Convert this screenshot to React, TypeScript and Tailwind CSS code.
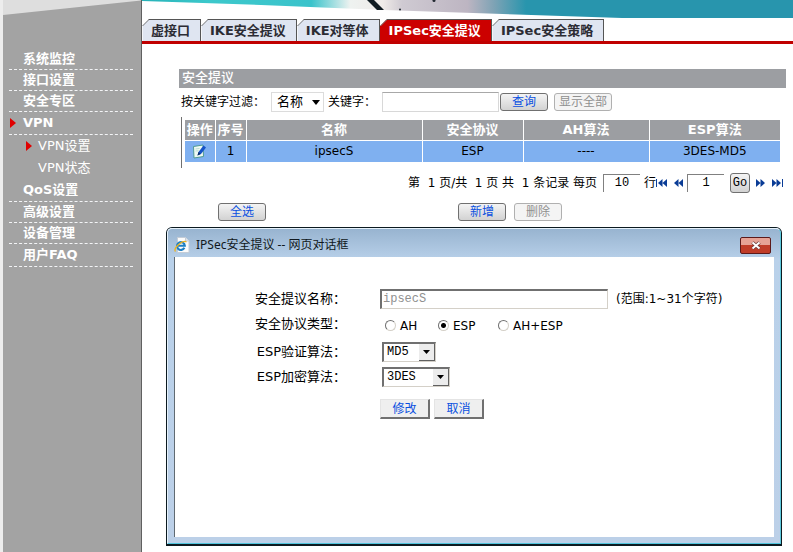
import type { ReactNode } from "react"

const tabs = ["虚接口", "IKE安全提议", "IKE对等体", "IPSec安全提议", "IPSec安全策略"]

const columns = [
  { title: "操作", width: "w-[30px]" },
  { title: "序号", width: "w-[31px]" },
  { title: "名称", width: "w-[176px]" },
  { title: "安全协议", width: "w-[101px]" },
  { title: "AH算法", width: "w-[126px]" },
  { title: "ESP算法", width: "" },
]

function RedArrow() {
  return (
    <svg width="6" height="10" viewBox="0 0 6 10" aria-hidden="true">
      <path d="M0 0l6 5-6 5z" fill="#e00000" />
    </svg>
  )
}

function MenuItem({ children, tall, active }: { children: ReactNode; tall?: boolean; active?: boolean }) {
  return (
    <li className={`${tall ? "h-[23px]" : "h-[21px]"} flex items-center border-b border-dashed border-gray-100`}>
      <span className="w-[14px] shrink-0 pl-px">{active && <RedArrow />}</span>
      <a href="#" className="font-bold leading-5">{children}</a>
    </li>
  )
}

function SubItem({ children, active }: { children: ReactNode; active?: boolean }) {
  return (
    <li className="flex h-[22px] items-center pl-[17px]">
      <span className="w-3 shrink-0">{active && <RedArrow />}</span>
      <a href="#" className="leading-5">{children}</a>
    </li>
  )
}

function Sidebar() {
  return (
    <aside className="w-[142px] shrink-0 border-r border-l-[3px] border-l-[#ededed] border-r-[#606060] bg-[#a3a3a3] text-[13px] text-white">
      <svg className="block h-[15px] w-full" viewBox="0 0 138 15" preserveAspectRatio="none" aria-hidden="true">
        <path d="M0 0h138v0.5L0 15z" fill="#dedede" />
      </svg>
      <ul className="mt-[34px] pl-1.5 pr-2">
        <MenuItem>系统监控</MenuItem>
        <MenuItem>接口设置</MenuItem>
        <MenuItem>安全专区</MenuItem>
        <MenuItem tall active>VPN</MenuItem>
        <SubItem active>VPN设置</SubItem>
        <SubItem>VPN状态</SubItem>
        <MenuItem tall>QoS设置</MenuItem>
        <MenuItem>高级设置</MenuItem>
        <MenuItem>设备管理</MenuItem>
        <MenuItem tall>用户FAQ</MenuItem>
      </ul>
    </aside>
  )
}

function Banner() {
  return (
    <svg className="block h-[19px] w-full" viewBox="0 0 651 19" preserveAspectRatio="none" aria-hidden="true">
      <defs>
        <linearGradient id="sea" x1="0" x2="1" y1="0" y2="0">
          <stop offset="0" stopColor="#27b2b8" />
          <stop offset="0.1" stopColor="#3cc8cb" />
          <stop offset="0.26" stopColor="#3ac3cb" />
          <stop offset="0.32" stopColor="#eef2f0" />
          <stop offset="0.37" stopColor="#efebe8" />
          <stop offset="0.4" stopColor="#cfcad2" />
          <stop offset="0.5" stopColor="#bdb5c2" />
          <stop offset="0.54" stopColor="#7fa3b5" />
          <stop offset="0.59" stopColor="#2895ad" />
          <stop offset="1" stopColor="#2895ad" />
        </linearGradient>
      </defs>
      <path d="M0 0h651v18H480L382 14.700 242 10 119 5 0 1z" fill="url(#sea)" />
      <path d="M225 0h7l10 10h-7z" fill="#101c22" />
      <circle cx="292" cy="0.500" r="1.500" fill="#222831" />
      <circle cx="258" cy="9.500" r="1" fill="#222831" />
    </svg>
  )
}

function TabBar() {
  return (
    <nav className="flex border-b-[3px] border-[#c00000] text-[13px] font-bold">
      {tabs.map((tab) => {
        const active = tab === "IPSec安全提议"
        return (
          <a
            key={tab}
            href="#"
            className={`relative flex h-[22px] items-center whitespace-nowrap border-r border-t border-[#555] pl-[9px] pr-2.5 ${
              active ? "bg-[#cc0000] text-white" : "bg-[#dfe5f1] text-[#2c2c34]"
            }`}
          >
            <svg className="absolute -top-px left-0" width="7" height="22" viewBox="0 0 7 22" aria-hidden="true">
              <path d="M0 0h7L0 7z" fill="#fff" />
              <path d="M7 .5L.5 7" stroke="#777" fill="none" />
              {!active && <path d="M.5 7v15" stroke="#f4f6fa" fill="none" />}
            </svg>
            {tab}
          </a>
        )
      })}
    </nav>
  )
}

function Button({ children, disabled }: { children: ReactNode; disabled?: boolean }) {
  return (
    <button
      type="button"
      disabled={disabled}
      className="flex h-[18px] min-w-12 items-center justify-center rounded-[3px] border border-[#707070] bg-linear-to-b from-[#f4f4f4] to-[#d2d2d2] px-1 text-xs text-[#0a50e0] disabled:border-[#b0b0b0] disabled:from-[#f4f4f4] disabled:to-[#f4f4f4] disabled:text-[#909090]"
    >
      {children}
    </button>
  )
}

function Filter() {
  return (
    <form className="flex h-[23px] items-center text-xs">
      <label htmlFor="field" className="w-[92px] pl-0.5">按关键字过滤：</label>
      <div className="relative">
        <select id="field" className="block h-5 w-[53px] appearance-none border border-[#dcdcdc] bg-white pl-[5px] text-[13px] leading-4">
          <option>名称</option>
        </select>
        <svg className="pointer-events-none absolute right-1 top-2" width="8" height="5" viewBox="0 0 8 5" aria-hidden="true">
          <path d="M0 0h8L4 5z" />
        </svg>
      </div>
      <label htmlFor="keyword" className="w-[58px] pl-1">关键字：</label>
      <input id="keyword" className="h-5 w-[117px] border border-[#d8d8d8] border-t-[#a8a8a8] px-1" />
      <div className="ml-px flex gap-1.5">
        <Button>查询</Button>
        <Button disabled>显示全部</Button>
      </div>
    </form>
  )
}

function EditIcon() {
  return (
    <svg width="15" height="15" viewBox="0 0 15 15" aria-hidden="true">
      <path d="M1.500 2.500L11 1l.5 11.500L2 14z" fill="#effaf2" stroke="#4f9a94" />
      <path d="M3.500 5l4-.5M3.500 7l3-.3" stroke="#b7dcd2" />
      <path d="M5.500 11.500L6.500 8l5-6.500 2.500 2-5 6.500z" fill="#1553c8" />
      <path d="M5.500 11.500l1-3.500 2.200 2z" fill="#0a2a66" />
    </svg>
  )
}

function ProposalTable() {
  return (
    <div className="ml-0.5 mr-1.5 mt-1 border-l border-[#707070] pb-1.5 pl-[3px] pt-[3px]">
      <table className="w-full table-fixed border-collapse text-center">
        <thead>
          <tr className="h-5 bg-[#9c9ea2] text-[13px] leading-5 text-white">
            {columns.map((col) => (
              <th key={col.title} className={`${col.width} whitespace-nowrap border-r border-white p-0 last:border-r-0`}>
                {col.title}
              </th>
            ))}
          </tr>
        </thead>
        <tbody>
          <tr className="h-[21px] border-t border-white bg-[#7fb0f0] text-xs leading-5 *:border-r *:border-white *:p-0 *:last:border-r-0">
            <td>
              <button type="button" aria-label="编辑" className="flex w-full justify-center">
                <EditIcon />
              </button>
            </td>
            <td>1</td>
            <td>ipsecS</td>
            <td>ESP</td>
            <td>----</td>
            <td>3DES-MD5</td>
          </tr>
        </tbody>
      </table>
    </div>
  )
}

function PageArrow({ label, flip, end }: { label: string; flip?: boolean; end?: boolean }) {
  return (
    <button type="button" aria-label={label}>
      <svg className={flip ? "-scale-x-100" : ""} width={end ? 11 : 9} height="8" viewBox={end ? "0 0 11 8" : "0 0 9 8"} aria-hidden="true">
        <path d="M0 0l4.500 4L0 8zM4.500 0L9 4 4.500 8z" fill="#0a3c96" />
        {end && <path d="M10.500 0v8" stroke="#0a3c96" />}
      </svg>
    </button>
  )
}

function Pager() {
  const box = "h-[18px] w-[37px] border-l border-t border-[#808080] text-center font-['Liberation_Mono',monospace] text-xs"
  return (
    <div className="mr-[3px] mt-[5px] flex h-5 items-center justify-end whitespace-pre text-xs">
      <span className="mr-1.5">第  1 页/共  1 页 共  1 条记录 每页</span>
      <input aria-label="每页行数" defaultValue="10" className={box} />
      <span className="ml-1">行</span>
      <PageArrow label="首页" flip end />
      <span className="w-[7px]" />
      <PageArrow label="上一页" flip />
      <input aria-label="页码" defaultValue="1" className={`${box} ml-1`} />
      <button type="button" className="mx-1.5 h-5 w-5 rounded-[3px] border border-[#707070] bg-linear-to-b from-[#f4f4f4] to-[#d2d2d2] font-['Liberation_Mono',monospace] text-xs leading-4">
        Go
      </button>
      <PageArrow label="下一页" />
      <span className="w-[7px]" />
      <PageArrow label="末页" end />
    </div>
  )
}

function IeIcon() {
  return (
    <svg width="16" height="16" viewBox="0 0 16 16" aria-hidden="true">
      <path d="M3.500.5h8l3.500 3.500v11.500H3.500z" fill="#fbfbfb" stroke="#c4ccd6" />
      <path d="M11.500.5v3.500H15" fill="#dfe5ec" stroke="#c4ccd6" />
      <path d="M10.400 10.800A3.900 3.900 0 1 1 10.800 8.700H4" fill="none" stroke="#1d7fc4" strokeWidth="2.100" />
      <path d="M1.500 14.500C-1 11 8 3 12.500 4.800" fill="none" stroke="#eeb320" strokeWidth="1.300" />
    </svg>
  )
}

function DialogSelect({ id, value, width }: { id: string; value: string; width: string }) {
  return (
    <div className="relative ml-0.5">
      <select
        id={id}
        className={`${width} block h-5 appearance-none border-2 border-b border-r border-[#d4d0c8] border-l-[#707070] border-t-[#707070] bg-white pl-[3px] font-['Liberation_Mono',monospace] text-xs leading-4`}
      >
        <option>{value}</option>
      </select>
      <span className="pointer-events-none absolute bottom-px right-px top-0.5 flex w-4 items-center justify-center border-b border-r border-[#606060] bg-[#ececec]">
        <svg width="7" height="4" viewBox="0 0 7 4" aria-hidden="true">
          <path d="M0 0h7L3.500 4z" />
        </svg>
      </span>
    </div>
  )
}

function Radio({ label, checked, width }: { label: string; checked?: boolean; width: string }) {
  return (
    <label className={`${width} flex items-center gap-1 text-xs`}>
      <input
        type="radio"
        name="protocol"
        defaultChecked={checked}
        className="size-[11px] appearance-none rounded-full border border-[#d4d0c8] border-l-[#707070] border-t-[#707070] bg-white checked:bg-[radial-gradient(circle,#000_2px,#fff_3px)]"
      />
      {label}
    </label>
  )
}

function FormRow({ id, label, children }: { id?: string; label: string; children: ReactNode }) {
  return (
    <div className="flex h-[25px] items-center">
      <label htmlFor={id} className="mr-[34px] w-[91px] whitespace-nowrap text-right text-[13px]">{label}</label>
      {children}
    </div>
  )
}

function Dialog() {
  const button = "h-5 w-[50px] border border-b-2 border-r-2 border-[#e4e4e4] border-b-[#707070] border-r-[#707070] bg-[#efefef] text-xs leading-4 text-[#0a50e0]"
  return (
    <section
      role="dialog"
      aria-labelledby="dialog-title"
      className="absolute left-[166px] right-[11px] top-[227px] rounded-t-md border border-b-2 border-[#0c1a20] bg-[#bcd0e8]"
    >
      <div className="rounded-t-[5px] border border-[#e6f2fb] border-b-[#4fc4dc] border-r-[#5cc8dc] bg-linear-to-b from-[#98b4d0] via-[#b9d1ea] via-10% to-[#bcd0e8] px-1.5 pb-1.5">
        <header className="flex h-7 items-center pr-[3px] pt-1">
          <IeIcon />
          <h2 id="dialog-title" className="ml-1.5 grow font-['Noto_Sans','Noto_Sans_CJK_SC',sans-serif] text-xs text-[#101820]">
            IPSec安全提议 -- 网页对话框
          </h2>
          <button
            type="button"
            aria-label="关闭"
            className="flex h-[17px] w-[31px] items-center justify-center rounded-xs border border-[#5c1a1a] bg-linear-to-b from-[#e6a295] from-45% to-[#c03c28] to-50%"
          >
            <svg width="12" height="9" viewBox="0 0 12 9" aria-hidden="true">
              <path d="M2.500 1.500l7 6M9.500 1.500l-7 6" stroke="#6b3a38" strokeWidth="3.600" />
              <path d="M2.500 1.500l7 6M9.500 1.500l-7 6" stroke="#fff" strokeWidth="2" />
            </svg>
          </button>
        </header>
        <form className="border-l border-[#606a72] bg-white pb-[118px] pl-20 pt-[29px]">
          <FormRow id="name" label="安全提议名称：">
            <input
              id="name"
              disabled
              defaultValue="ipsecS"
              className="h-5 w-[228px] border-2 border-b border-r border-[#d4d0c8] border-l-[#707070] border-t-[#707070] pl-px font-['Liberation_Mono',monospace] text-xs text-[#909090]"
            />
            <span className="ml-2 text-xs">(范围:1~31个字符)</span>
          </FormRow>
          <FormRow label="安全协议类型：">
            <div className="flex pl-[5px] pt-1">
              <Radio label="AH" width="w-[53px]" />
              <Radio label="ESP" checked width="w-[60px]" />
              <Radio label="AH+ESP" width="" />
            </div>
          </FormRow>
          <div className="mt-[3px]">
            <FormRow id="auth" label="ESP验证算法：">
              <DialogSelect id="auth" value="MD5" width="w-[54px]" />
            </FormRow>
            <FormRow id="enc" label="ESP加密算法：">
              <DialogSelect id="enc" value="3DES" width="w-[68px]" />
            </FormRow>
          </div>
          <div className="ml-[125px] mt-2.5 flex gap-1">
            <button type="button" className={button}>修改</button>
            <button type="button" className={button}>取消</button>
          </div>
        </form>
      </div>
    </section>
  )
}

export default function App() {
  return (
    <div className="relative flex min-h-screen bg-white font-['DejaVu_Sans','Noto_Sans_CJK_SC',sans-serif] text-black">
      <Sidebar />
      <main className="min-w-0 grow">
        <Banner />
        <TabBar />
        <div className="mt-[25px] pl-[37px] pr-[7px]">
          <h1 className="h-[19px] bg-[#9c9ea2] pl-[3px] text-[13px] font-medium leading-[18px] text-white">安全提议</h1>
          <div className="mt-0.5">
            <Filter />
          </div>
          <ProposalTable />
          <Pager />
          <div className="mt-2.5 flex pl-[39px]">
            <Button>全选</Button>
            <div className="ml-48 flex gap-2">
              <Button>新增</Button>
              <Button disabled>删除</Button>
            </div>
          </div>
        </div>
      </main>
      <Dialog />
    </div>
  )
}
